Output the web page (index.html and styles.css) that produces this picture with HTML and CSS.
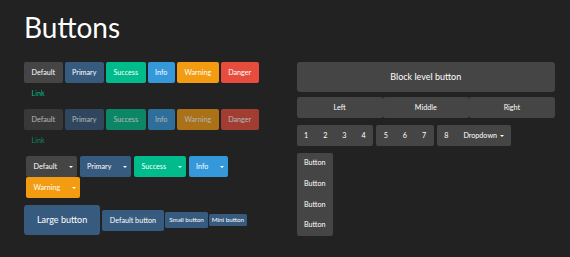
FILE: index.html
```html
<!DOCTYPE html>
<html lang="en">
<head>
  <meta charset="UTF-8">
  <title>Buttons</title>
  <link rel="stylesheet" href="styles.css">
</head>
<body>
  <div class="page">
    <h1 class="title">Buttons</h1>
    <div class="columns">
      <div class="col">
        <p class="line">
          <a class="btn btn-default">Default</a>
          <a class="btn btn-primary">Primary</a>
          <a class="btn btn-success">Success</a>
          <a class="btn btn-info">Info</a>
          <a class="btn btn-warning">Warning</a>
          <a class="btn btn-danger">Danger</a>
          <a class="btn btn-link">Link</a>
        </p>
        <p class="line">
          <a class="btn btn-default disabled">Default</a>
          <a class="btn btn-primary disabled">Primary</a>
          <a class="btn btn-success disabled">Success</a>
          <a class="btn btn-info disabled">Info</a>
          <a class="btn btn-warning disabled">Warning</a>
          <a class="btn btn-danger disabled">Danger</a>
          <a class="btn btn-link disabled">Link</a>
        </p>
        <div class="line splits">
          <div class="group">
            <a class="btn btn-default">Default</a><a class="btn btn-default toggle"><span class="caret"></span></a>
          </div>
          <div class="group">
            <a class="btn btn-primary">Primary</a><a class="btn btn-primary toggle"><span class="caret"></span></a>
          </div>
          <div class="group">
            <a class="btn btn-success">Success</a><a class="btn btn-success toggle"><span class="caret"></span></a>
          </div>
          <div class="group">
            <a class="btn btn-info">Info</a><a class="btn btn-info toggle"><span class="caret"></span></a>
          </div>
          <div class="group">
            <a class="btn btn-warning">Warning</a><a class="btn btn-warning toggle"><span class="caret"></span></a>
          </div>
        </div>
        <p class="line sizes">
          <a class="btn btn-primary btn-lg">Large button</a>
          <a class="btn btn-primary">Default button</a>
          <a class="btn btn-primary btn-sm">Small button</a>
          <a class="btn btn-primary btn-xs">Mini button</a>
        </p>
      </div>

      <div class="col">
        <p class="block-line">
          <a class="btn btn-default btn-lg btn-block">Block level button</a>
        </p>
        <div class="justified">
          <a class="btn btn-default">Left</a>
          <a class="btn btn-default">Middle</a>
          <a class="btn btn-default">Right</a>
        </div>
        <div class="toolbar">
          <div class="group">
            <a class="btn btn-default">1</a><a class="btn btn-default">2</a><a class="btn btn-default">3</a><a class="btn btn-default">4</a>
          </div>
          <div class="group">
            <a class="btn btn-default">5</a><a class="btn btn-default">6</a><a class="btn btn-default">7</a>
          </div>
          <div class="group">
            <a class="btn btn-default">8</a><a class="btn btn-default">Dropdown <span class="caret"></span></a>
          </div>
        </div>
        <div class="vertical">
          <a class="btn btn-default">Button</a>
          <a class="btn btn-default">Button</a>
          <a class="btn btn-default">Button</a>
          <a class="btn btn-default">Button</a>
        </div>
      </div>
    </div>
  </div>
</body>
</html>
```

FILE: styles.css
```css
body{
  margin: 0;
  background: #222222;
  color: #ffffff;
  font-family: Lato, "Noto Sans", sans-serif;
}
.page{
  padding: 10px 15px 0 24px;
}
.title{
  margin: 0 0 18px;
  font-size: 28px;
  font-weight: 400;
  line-height: 34px;
}
.columns{
  display: grid;
  grid-template-columns: 1fr 1fr;
  column-gap: 14px;
}
.line{
  display: flex;
  flex-wrap: wrap;
  column-gap: 2px;
  margin: 0 0 5px;
}

/* buttons */
.btn{
  display: inline-block;
  padding: 5px 7.5px;
  font-size: 7.2px;
  line-height: 11px;
  text-align: center;
  white-space: nowrap;
  color: #ffffff;
  border-radius: 2px;
  cursor: pointer;
}
.btn-default{ background-color: #464545; }
.btn-primary{ background-color: #375a7f; }
.btn-success{ background-color: #00bc8c; }
.btn-info{ background-color: #3498db; }
.btn-warning{ background-color: #f39c12; }
.btn-danger{ background-color: #e74c3c; }
.btn-link{
  color: #00bc8c;
  background: transparent;
}
.disabled{
  opacity: 0.65;
}
.btn-lg{
  padding: 9px 13px;
  font-size: 9px;
  line-height: 12px;
  border-radius: 3px;
}
.btn-sm{
  padding: 3px 4.5px;
  font-size: 6.3px;
  line-height: 10px;
  border-radius: 1.5px;
}
.btn-xs{
  padding: 1px 2.5px;
  font-size: 6.3px;
  line-height: 10px;
  border-radius: 1.5px;
}
.btn-block{
  display: block;
}
.caret{
  display: inline-block;
  width: 0;
  height: 0;
  margin-left: 1px;
  vertical-align: middle;
  border-top: 2px solid;
  border-left: 2px solid transparent;
  border-right: 2px solid transparent;
}

/* groups */
.group{
  display: flex;
}
.group .btn{
  border-radius: 0;
}
.group .btn:first-child{
  border-radius: 2px 0 0 2px;
}
.group .btn:last-child{
  border-radius: 0 2px 2px 0;
}
.toggle{
  padding-left: 3.5px;
  padding-right: 3.5px;
}
.splits{
  column-gap: 3px;
  padding-left: 2px;
  margin-bottom: 7px;
}
.sizes{
  align-items: center;
  column-gap: 1px;
}
.sizes .btn-lg{
  margin-right: 1px;
}

/* right column */
.block-line{
  margin: 0 0 5px;
}
.justified{
  display: grid;
  grid-template-columns: 1fr 1fr 1fr;
  margin-bottom: 7px;
  border-radius: 2px;
  overflow: hidden;
}
.toolbar{
  display: flex;
  gap: 3px;
  margin-bottom: 7px;
}
.vertical{
  display: flex;
  flex-direction: column;
  width: fit-content;
  border-radius: 2px;
  overflow: hidden;
}
.vertical .btn{
  padding-top: 5px;
  padding-bottom: 5px;
  line-height: 10.75px;
  border-radius: 0;
}
```
